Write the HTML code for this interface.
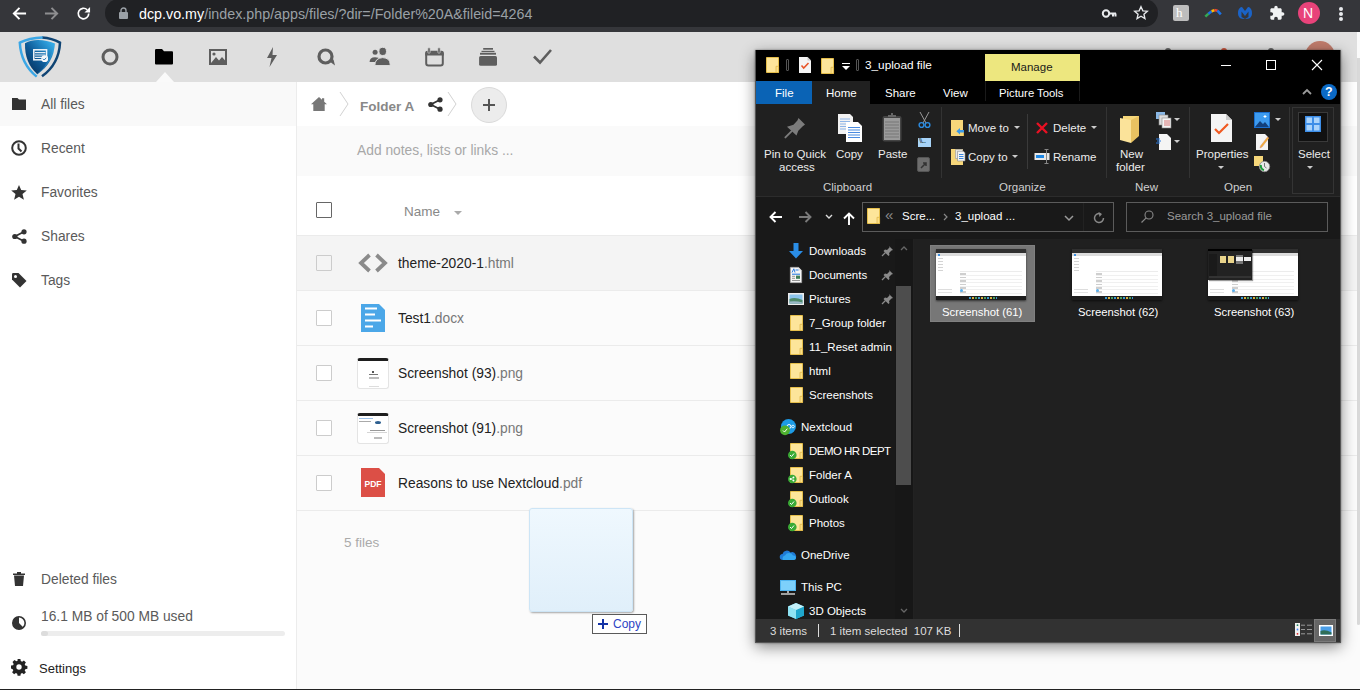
<!DOCTYPE html>
<html><head><meta charset="utf-8">
<style>
*{box-sizing:border-box;margin:0;padding:0}
html,body{width:1360px;height:690px;overflow:hidden;background:#fff;font-family:"Liberation Sans",sans-serif;position:relative}
.a{position:absolute}
.t{position:absolute;white-space:nowrap;line-height:1}
svg{position:absolute;overflow:visible}
#chrome{left:0;top:0;width:1360px;height:32px;background:#35363a}
#omni{left:105px;top:-1px;width:1053px;height:28px;background:#202124;border-radius:14px}
#nch{left:0;top:32px;width:1360px;height:50px;background:#dfdfdf}
#nav{left:0;top:82px;width:297px;height:608px;background:#fff;border-right:1px solid #ececec}
.nt{font-size:13.8px;color:#5a5a5a}
#main{left:297px;top:82px;width:1063px;height:608px;background:#fbfbfb}
.cb{position:absolute;width:16px;height:16px;border:1px solid #ccc;border-radius:1px;background:#fff}
.fn{font-size:13.8px;color:#222}
.ext{color:#777}
.hl{position:absolute;left:297px;width:1063px;height:1px;background:#ebebeb}
.ni{font-size:11.5px;color:#fff}.ci{font-size:11.3px;color:#fff}.si{font-size:11.5px;color:#ddd}
</style></head><body>
<!-- CHROME -->
<div id="chrome" class="a"></div>
<div id="omni" class="a"></div>
<svg style="left:12px;top:6px" width="15" height="15" viewBox="0 0 16 16"><path d="M15 8H2.5M8 2L2 8l6 6" fill="none" stroke="#fff" stroke-width="2.1"/></svg>
<svg style="left:44px;top:6px" width="15" height="15" viewBox="0 0 16 16"><path d="M1 8h12.5M8 2l6 6-6 6" fill="none" stroke="#8e8e90" stroke-width="2.1"/></svg>
<svg style="left:76px;top:6px" width="15" height="15" viewBox="0 0 16 16"><path d="M13.6 8A5.6 5.6 0 1 1 11.9 4" fill="none" stroke="#fff" stroke-width="1.8"/><path d="M15 1v6H9z" fill="#fff"/></svg>
<svg style="left:119px;top:7px" width="9" height="12" viewBox="0 0 9 12"><path d="M2 5V3.5a2.5 2.5 0 0 1 5 0V5" fill="none" stroke="#9aa0a6" stroke-width="1.4"/><rect x="0" y="5" width="9" height="7" rx="1" fill="#9aa0a6"/></svg>
<div class="t" style="left:139px;top:7px;font-size:14.3px;color:#9aa0a6"><span style="color:#fff">dcp.vo.my</span>/index.php/apps/files/?dir=/Folder%20A&amp;fileid=4264</div>
<!-- key -->
<svg style="left:1102px;top:9px" width="14" height="9" viewBox="0 0 14 9"><circle cx="4" cy="4.5" r="3.2" fill="none" stroke="#e8eaed" stroke-width="2"/><path d="M7 4.5h7M11 4.5v3M13.5 4.5v3" stroke="#e8eaed" stroke-width="2"/></svg>
<svg style="left:1133px;top:5px" width="16" height="16" viewBox="0 0 24 24"><path d="M12 2.5l2.8 6.2 6.7.6-5.1 4.5 1.5 6.6L12 16.9l-5.9 3.5 1.5-6.6-5.1-4.5 6.7-.6z" fill="none" stroke="#e8eaed" stroke-width="2"/></svg>
<div class="a" style="left:1173px;top:5px;width:16px;height:16px;background:#bdbdbd;border-radius:2px"></div>
<div class="t" style="left:1176px;top:6px;font-size:13px;color:#fff;font-family:'Liberation Serif'">h</div>
<svg style="left:1204px;top:8px" width="18" height="10" viewBox="0 0 18 10" stroke-width="2.6" fill="none"><path d="M1.3 8.6L4.6 5.6" stroke="#34a853"/><path d="M4.4 5.8L7.8 3.2" stroke="#1a73e8"/><path d="M7.6 3.3L10.6 2.1" stroke="#fbbc04"/><path d="M10.4 2.1L13.6 2.8" stroke="#ea4335"/><path d="M13.4 2.7L16.8 6.3" stroke="#1a73e8"/></svg>
<svg style="left:1237px;top:6px" width="16" height="14" viewBox="0 0 16 14"><path d="M1 7C1 2 4 1 5 1l3 4 3-4c1 0 4 1 4 6s-3 6-7 6-7-1-7-6z" fill="#1b63c6"/><path d="M4.5 5.5L8 10l3.5-4.5V11L8 13 4.5 11z" fill="#35363a"/></svg>
<svg style="left:1269px;top:5px" width="16" height="16" viewBox="0 0 24 24"><path d="M20.5 11H19V7c0-1.1-.9-2-2-2h-4V3.5C13 2.12 11.88 1 10.5 1S8 2.12 8 3.5V5H4c-1.1 0-1.99.9-1.99 2v3.8H3.5c1.49 0 2.7 1.21 2.7 2.7s-1.21 2.7-2.7 2.7H2V20c0 1.1.9 2 2 2h3.8v-1.5c0-1.490 1.21-2.7 2.7-2.7 1.49 0 2.7 1.21 2.7 2.7V22H17c1.1 0 2-.9 2-2v-4h1.5c1.38 0 2.5-1.12 2.5-2.5S21.88 11 20.5 11z" fill="#f1f3f4"/></svg>
<div class="a" style="left:1298px;top:2px;width:22px;height:22px;border-radius:50%;background:#e8437a"></div>
<div class="t" style="left:1303px;top:6px;font-size:14px;color:#fff">N</div>
<div class="a" style="left:1339px;top:7px;width:4px;height:4px;border-radius:50%;background:#e8eaed;box-shadow:0 5px 0 #e8eaed,0 10px 0 #e8eaed"></div>

<!-- NC HEADER -->
<div id="nch" class="a"></div>
<div class="a" style="left:1305px;top:41px;width:30px;height:30px;border-radius:50%;background:#c07c6c"></div>
<div class="a" style="left:1165px;top:48px;width:6px;height:6px;border-radius:50%;background:#666"></div>
<div class="a" style="left:1221px;top:48px;width:6px;height:6px;border-radius:50%;background:#c9553f"></div>
<div class="a" style="left:1268px;top:48px;width:6px;height:6px;border-radius:50%;background:#666"></div>
<!-- logo -->
<svg style="left:14px;top:34px" width="52" height="46" viewBox="0 0 52 46"><defs><linearGradient id="lg" x1="0.1" y1="0.9" x2="0.9" y2="0.1"><stop offset="0" stop-color="#06325e"/><stop offset="0.45" stop-color="#0e5c99"/><stop offset="1" stop-color="#34a9e6"/></linearGradient></defs>
<path d="M28 3.4Q38 4 46 8.7Q45 30 28 42.3" fill="none" stroke="#0f4474" stroke-width="2.5"/>
<path d="M28.7 3.4Q15 3.6 5.8 8.7Q7 30 22.7 42.6" fill="none" stroke="#3ba7e6" stroke-width="2.5"/>
<path d="M11 9.3Q17 6 24 6Q33 6 40.8 9.5Q40 29 23.3 40.2Q10.5 29 11 9.3z" fill="url(#lg)"/>
<path d="M23.3 40.2Q37 30 40.8 9.5" fill="none" stroke="#3aa4e2" stroke-width="0.8" opacity=".6"/>
<rect x="19.8" y="15.8" width="12.8" height="10" fill="none" stroke="#f2f6fa" stroke-width="1.5"/>
<path d="M21 18.6h10.5M21 21h10.5M21 23.4h7" stroke="#e8eef5" stroke-width="1.1"/>
<circle cx="30.7" cy="24.7" r="3.4" fill="#f4f7fa"/><path d="M29 24.8l1.2 1.2 2-2.2" stroke="#1a70b0" stroke-width="0.9" fill="none"/></svg>
<!-- header icons -->
<svg style="left:101px;top:48px" width="18" height="18" viewBox="0 0 18 18"><circle cx="9" cy="9" r="7" fill="none" stroke="#5e5e5e" stroke-width="3"/></svg>
<svg style="left:155px;top:49px" width="18" height="16" viewBox="0 0 18 16"><path d="M0 1.2Q0 0 1.2 0H7l2 2.2h8Q18 2.2 18 3.4V14.6Q18 15.5 17 15.5H1Q0 15.5 0 14.5z" fill="#000"/></svg>
<svg style="left:209px;top:49px" width="18" height="16" viewBox="0 0 18 16"><rect x="1" y="1" width="16" height="14" fill="none" stroke="#5e5e5e" stroke-width="2"/><circle cx="5" cy="5" r="1.6" fill="#5e5e5e"/><path d="M2 14l5-6 3 3.5 3-3.5 4 4.5v1.5z" fill="#5e5e5e"/></svg>
<svg style="left:266px;top:47px" width="12" height="20" viewBox="0 0 12 20"><path d="M7 0L1 11h4.5L3.5 20 11 8H6.5z" fill="#5e5e5e"/></svg>
<svg style="left:317px;top:48px" width="19" height="19" viewBox="0 0 19 19"><circle cx="8.5" cy="8.5" r="6.5" fill="none" stroke="#5e5e5e" stroke-width="3.2"/><path d="M12 13l6 4.5-1.5-6z" fill="#5e5e5e"/></svg>
<svg style="left:365px;top:42px" width="140" height="30" viewBox="0 0 140 30">
<circle cx="10.1" cy="10.3" r="2.5" fill="#5e5e5e"/><path d="M4.6 20Q4.6 15.3 10 15.2Q13.8 15.3 15.5 17.5V20z" fill="#5e5e5e"/>
<ellipse cx="17.7" cy="9.4" rx="3.8" ry="4.1" fill="#5e5e5e" stroke="#dfdfdf" stroke-width="1"/><path d="M9.8 23.6Q9.8 16 17.7 15.6Q25.2 16 25.2 22.4Q25.2 23.6 24 23.6z" fill="#5e5e5e" stroke="#dfdfdf" stroke-width="1"/>
<rect x="61.2" y="10" width="16.6" height="13.5" rx="2.2" fill="none" stroke="#5e5e5e" stroke-width="2"/><path d="M60.2 13.4V11Q60.2 8.8 62.4 8.8H76.6Q78.8 8.8 78.8 11V13.4z" fill="#5e5e5e"/>
<rect x="62.8" y="5.8" width="2.4" height="5.4" rx="1" fill="#5e5e5e" stroke="#dfdfdf" stroke-width="0.6"/><rect x="72.8" y="5.8" width="2.4" height="5.4" rx="1" fill="#5e5e5e" stroke="#dfdfdf" stroke-width="0.6"/>
<rect x="118.2" y="6" width="9.8" height="1.7" fill="#5e5e5e"/><rect x="116.5" y="8.8" width="13" height="1.3" fill="#5e5e5e"/><rect x="115" y="10.8" width="16" height="1.9" fill="#5e5e5e"/><rect x="114.1" y="13.9" width="17.9" height="9.8" rx="1.5" fill="#5e5e5e"/>
</svg>
<svg style="left:533px;top:48px" width="19" height="17" viewBox="0 0 19 17"><path d="M1 8.5l6 6L18 2" fill="none" stroke="#5e5e5e" stroke-width="2.6"/></svg>
<!-- triangle -->
<div class="a" style="left:156px;top:72px;width:0;height:0;border-left:9px solid transparent;border-right:9px solid transparent;border-bottom:10px solid #fafafa"></div>

<!-- NAV -->
<div id="nav" class="a"></div>
<div class="a" style="left:0;top:82px;width:296px;height:44px;background:#f9f9f9"></div>
<svg style="left:12px;top:98px" width="14" height="12" viewBox="0 0 14 12"><path d="M0 0h5.5l1.5 1.6H14V12H0z" fill="#333"/></svg>
<div class="t nt" style="left:41px;top:98px">All files</div>
<svg style="left:11px;top:140px" width="16" height="16" viewBox="0 0 16 16"><circle cx="8" cy="8" r="6.8" fill="none" stroke="#333" stroke-width="2"/><path d="M7.5 3.5V8.5l3 3" fill="none" stroke="#333" stroke-width="2"/></svg>
<div class="t nt" style="left:41px;top:142px">Recent</div>
<svg style="left:11px;top:185px" width="16" height="15" viewBox="0 0 16 15"><path d="M8 0l2.2 5.1 5.6.4-4.3 3.6 1.4 5.6L8 11.8l-4.9 2.9 1.4-5.6L.2 5.5l5.6-.4z" fill="#333"/></svg>
<div class="t nt" style="left:41px;top:186px">Favorites</div>
<svg style="left:12px;top:229px" width="15" height="15" viewBox="0 0 15 15"><circle cx="12" cy="2.8" r="2.6" fill="#333"/><circle cx="2.8" cy="7.5" r="2.6" fill="#333"/><circle cx="12" cy="12.2" r="2.6" fill="#333"/><path d="M12 2.8L2.8 7.5 12 12.2" fill="none" stroke="#333" stroke-width="1.8"/></svg>
<div class="t nt" style="left:41px;top:230px">Shares</div>
<svg style="left:12px;top:273px" width="15" height="15" viewBox="0 0 15 15"><path d="M0 1.2Q0 0 1.2 0H6.5L14.5 8 8 14.5 0 6.5z" fill="#333"/><circle cx="3.5" cy="3.5" r="1.5" fill="#fff"/></svg>
<div class="t nt" style="left:41px;top:274px">Tags</div>

<svg style="left:13px;top:572px" width="12" height="14" viewBox="0 0 12 14"><path d="M0 1.5h12V3H0zM4 0h4v1.5H4zM1 3.5h10l-1 10.5H2z" fill="#333"/></svg>
<div class="t nt" style="left:41px;top:573px">Deleted files</div>
<svg style="left:12px;top:616px" width="14" height="14" viewBox="0 0 14 14"><circle cx="7" cy="7" r="6.2" fill="#fff" stroke="#333" stroke-width="1.6"/><path d="M7 7V0.8A6.2 6.2 0 1 0 11.4 11.4z" fill="#333"/></svg>
<div class="t nt" style="left:41px;top:610px">16.1 MB of 500 MB used</div>
<div class="a" style="left:41px;top:631px;width:244px;height:5px;border-radius:3px;background:#ededed"></div>
<div class="a" style="left:41px;top:631px;width:7px;height:5px;border-radius:3px;background:#dcdcdc"></div>
<svg style="left:11px;top:659px" width="16" height="16" viewBox="0 0 16 16"><path d="M6.6 0h2.8l.4 2.1 1.3.6 1.8-1.2 2 2-1.2 1.8.6 1.3 2.1.4v2.8l-2.1.4-.6 1.3 1.2 1.8-2 2-1.8-1.2-1.3.6-.4 2.1H6.6l-.4-2.1-1.3-.6-1.8 1.2-2-2 1.2-1.8-.6-1.3L0 9.4V6.6l2.1-.4.6-1.3-1.2-1.8 2-2 1.8 1.2 1.3-.6z" fill="#222"/><circle cx="8" cy="8" r="2.7" fill="#fff"/></svg>
<div class="t" style="left:39px;top:662px;font-size:13px;color:#222">Settings</div>

<!-- MAIN -->
<div id="main" class="a"></div>
<div class="a" style="left:297px;top:82px;width:1063px;height:44px;background:#fff"></div>
<svg style="left:311px;top:97px" width="16" height="14" viewBox="0 0 16 14"><path d="M8 0L0 7.3h2.3V14h11.4V7.3H16L13.2 4.8V1.2h-2.2v1.6z" fill="#777"/></svg>
<svg style="left:339px;top:91px" width="10" height="26" viewBox="0 0 10 26"><path d="M1 1l8 12-8 12" fill="none" stroke="#d2d2d2" stroke-width="1"/></svg>
<div class="t" style="left:360px;top:100px;font-size:13.5px;font-weight:bold;color:#888">Folder A</div>
<svg style="left:428px;top:97px" width="15" height="15" viewBox="0 0 15 15"><circle cx="12" cy="2.8" r="2.6" fill="#333"/><circle cx="2.8" cy="7.5" r="2.6" fill="#333"/><circle cx="12" cy="12.2" r="2.6" fill="#333"/><path d="M12 2.8L2.8 7.5 12 12.2" fill="none" stroke="#333" stroke-width="1.8"/></svg>
<svg style="left:447px;top:91px" width="10" height="26" viewBox="0 0 10 26"><path d="M1 1l8 12-8 12" fill="none" stroke="#d2d2d2" stroke-width="1"/></svg>
<div class="a" style="left:471px;top:87px;width:36px;height:36px;border-radius:50%;background:#ececec;border:1px solid #dadada"></div>
<div class="a" style="left:483px;top:104px;width:12px;height:2px;background:#555"></div>
<div class="a" style="left:488px;top:99px;width:2px;height:12px;background:#555"></div>
<div class="a" style="left:297px;top:126px;width:1063px;height:50px;background:#fafafa"></div>
<div class="t" style="left:357px;top:144px;font-size:13.8px;color:#a8a8a8">Add notes, lists or links ...</div>
<div class="a" style="left:297px;top:176px;width:1063px;height:59px;background:#fff"></div>
<div class="cb" style="left:316px;top:202px;border-color:#666"></div>
<div class="t" style="left:404px;top:205px;font-size:13.5px;color:#888">Name</div>
<svg style="left:454px;top:211px" width="8" height="4" viewBox="0 0 8 4"><path d="M0 0h8L4 4z" fill="#aaa"/></svg>
<div class="hl" style="top:235px"></div>
<div class="a" style="left:297px;top:236px;width:1063px;height:54px;background:#f4f4f4"></div>
<div class="hl" style="top:290px"></div>
<div class="hl" style="top:345px"></div>
<div class="hl" style="top:400px"></div>
<div class="hl" style="top:455px"></div>
<div class="hl" style="top:510px"></div>
<div class="cb" style="left:316px;top:255px;background:#f4f4f4"></div>
<div class="cb" style="left:316px;top:310px"></div>
<div class="cb" style="left:316px;top:365px"></div>
<div class="cb" style="left:316px;top:420px"></div>
<div class="cb" style="left:316px;top:475px"></div>
<svg style="left:358px;top:253px" width="30" height="20" viewBox="0 0 30 20"><path d="M11.5 2L3 10l8.5 8M18.5 2L27 10l-8.5 8" fill="none" stroke="#8a8a8a" stroke-width="3.8"/></svg>
<div class="t fn" style="left:398px;top:257px">theme-2020-1<span class="ext">.html</span></div>
<svg style="left:361px;top:304px" width="24" height="28" viewBox="0 0 24 28"><path d="M0 0h18l6 6v22H0z" fill="#4ba7e8"/><path d="M4 4.5h12M4 10.5h10M4 16.5h16M4 22.5h8" stroke="#fff" stroke-width="2"/></svg>
<div class="t fn" style="left:398px;top:312px">Test1<span class="ext">.docx</span></div>
<div class="a" style="left:357px;top:358px;width:32px;height:31px;border:1px solid #e4e4e4;border-top:3px solid #1e1e1e;border-radius:3px;background:#fff"></div>
<div class="a" style="left:372px;top:371px;width:2px;height:2px;background:#555"></div>
<div class="a" style="left:369px;top:374px;width:9px;height:1px;background:#777"></div>
<div class="a" style="left:369px;top:377px;width:10px;height:2px;border:1px solid #bbb;background:#fff"></div>
<div class="a" style="left:369px;top:386px;width:10px;height:1px;background:#ddd"></div>
<div class="t fn" style="left:398px;top:367px">Screenshot (93)<span class="ext">.png</span></div>
<div class="a" style="left:357px;top:413px;width:32px;height:31px;border:1px solid #e4e4e4;border-top:3px solid #1e1e1e;border-radius:3px;background:#fff"></div>
<div class="a" style="left:359px;top:418px;width:14px;height:1px;background:#9cc0e8"></div>
<div class="a" style="left:359px;top:421px;width:12px;height:1px;background:#aaa"></div>
<div class="a" style="left:375px;top:421px;width:6px;height:3px;border-radius:50%;background:#2d5f8f"></div>
<div class="a" style="left:370px;top:430px;width:15px;height:1px;background:#999"></div>
<div class="a" style="left:367px;top:432px;width:20px;height:1px;background:#d5d5d5"></div>
<div class="a" style="left:374px;top:437px;width:8px;height:2px;background:#bbb"></div>
<div class="t fn" style="left:398px;top:422px">Screenshot (91)<span class="ext">.png</span></div>
<svg style="left:361px;top:468px" width="24" height="29" viewBox="0 0 24 29"><path d="M0 0h18l6 6v23H0z" fill="#dc4f46"/><text x="12" y="18.5" font-family="Liberation Sans" font-weight="bold" font-size="8.5" fill="#fff" text-anchor="middle">PDF</text></svg>
<div class="t fn" style="left:398px;top:477px">Reasons to use Nextcloud<span class="ext">.pdf</span></div>
<div class="t" style="left:344px;top:536px;font-size:13.5px;color:#aaa">5 files</div>
<!-- drag ghost -->
<div class="a" style="left:529px;top:508px;width:104px;height:104px;border:1px solid #cde5f6;border-radius:3px;background:linear-gradient(#eff8fe,#e0effa);box-shadow:1px 1px 2px rgba(0,0,0,.35)"></div>
<div class="a" style="left:592px;top:614px;width:55px;height:20px;border:1px solid #5a5a5a;background:#fff"></div>
<div class="a" style="left:598px;top:623px;width:10px;height:2px;background:#1433a6"></div>
<div class="a" style="left:602px;top:619px;width:2px;height:10px;background:#1433a6"></div>
<div class="t" style="left:613px;top:618px;font-size:12px;color:#2d44c4">Copy</div>
<div class="a" style="left:0;top:689px;width:1360px;height:1px;background:#222"></div>
<div class="a" style="left:1357px;top:32px;width:3px;height:26px;background:#fafafa"></div>
<div class="a" style="left:1357px;top:58px;width:3px;height:567px;background:#d9d9d9;border-radius:0 0 2px 2px"></div>
<!-- EXPLORER -->
<div class="a" style="left:755px;top:50px;width:586px;height:593px;background:#202020;border:1px solid #555;box-shadow:0 4px 14px rgba(0,0,0,.45),0 0 2px rgba(0,0,0,.4)"></div>
<div class="a" style="left:756px;top:50px;width:584px;height:54px;background:#000"></div>
<!-- title icons -->
<svg style="left:766px;top:57px" width="14" height="16" viewBox="0 0 14 16"><path d="M0.5 0.5h12v15h-12z" fill="#fde59a" stroke="#f0c64a" stroke-width=".9"/><path d="M10 9.3h2.6v6.2H10z" fill="#fbdf86" stroke="#ddb240" stroke-width=".7"/></svg>
<div class="a" style="left:786px;top:59px;width:3px;height:12px;border:1px solid #555;border-radius:1px"></div>
<svg style="left:799px;top:57px" width="12" height="16" viewBox="0 0 12 16"><path d="M0 0h8.5L12 3.5V16H0z" fill="#f4f4f4"/><path d="M8.5 0v3.5H12" fill="#ccc"/><path d="M2.5 8.5l2.2 2.5 4.8-5" fill="none" stroke="#e8562a" stroke-width="1.6"/></svg>
<svg style="left:821px;top:58px" width="14" height="16" viewBox="0 0 14 16"><path d="M0.5 0.5h12v15h-12z" fill="#fde59a" stroke="#f0c64a" stroke-width=".9"/><path d="M10 9.3h2.6v6.2H10z" fill="#fbdf86" stroke="#ddb240" stroke-width=".7"/></svg>
<svg style="left:842px;top:63px" width="8" height="8" viewBox="0 0 8 8"><path d="M0 0.5h8" stroke="#fff" stroke-width="1"/><path d="M0 3h8L4 7z" fill="#fff"/></svg>
<div class="a" style="left:856px;top:59px;width:3px;height:12px;border:1px solid #555;border-radius:1px"></div>
<div class="t" style="left:865px;top:60px;font-size:11.8px;color:#fff">3_upload file</div>
<div class="a" style="left:985px;top:54px;width:95px;height:27px;background:#ede77f"></div>
<div class="t" style="left:1011px;top:62px;font-size:11.5px;color:#1a1a1a">Manage</div>
<div class="a" style="left:1221px;top:65px;width:10px;height:1px;background:#fff"></div>
<div class="a" style="left:1266px;top:60px;width:10px;height:10px;border:1px solid #fff"></div>
<svg style="left:1312px;top:60px" width="10" height="10" viewBox="0 0 10 10"><path d="M0 0l10 10M10 0L0 10" stroke="#fff" stroke-width="1.1"/></svg>
<!-- tabs -->
<div class="a" style="left:756px;top:81px;width:56px;height:23px;background:#0a63b5"></div>
<div class="a" style="left:812px;top:81px;width:58px;height:23px;background:#202020"></div>
<div class="t" style="left:775px;top:88px;font-size:11.5px;color:#fff">File</div>
<div class="t" style="left:826px;top:88px;font-size:11.5px;color:#fff">Home</div>
<div class="t" style="left:885px;top:88px;font-size:11.5px;color:#fff">Share</div>
<div class="t" style="left:943px;top:88px;font-size:11.5px;color:#fff">View</div>
<div class="a" style="left:985px;top:81px;width:95px;height:20px;border-left:1px solid #1a1a1a;border-right:1px solid #1a1a1a"></div>
<div class="t" style="left:999px;top:88px;font-size:11.3px;color:#fff">Picture Tools</div>
<svg style="left:1302px;top:88px" width="10" height="7" viewBox="0 0 10 7"><path d="M1 6l4-4 4 4" fill="none" stroke="#9b9b9b" stroke-width="1.8"/></svg>
<div class="a" style="left:1321px;top:84px;width:16px;height:16px;border-radius:50%;background:#0b6ac6"></div>
<div class="t" style="left:1325px;top:86px;font-size:12.5px;font-weight:bold;color:#fff">?</div>
<!-- ribbon -->
<div class="a" style="left:756px;top:196px;width:584px;height:1px;background:#2c2c2c"></div>
<div class="a" style="left:941px;top:107px;width:1px;height:71px;background:#333"></div>
<div class="a" style="left:1106px;top:107px;width:1px;height:71px;background:#333"></div>
<div class="a" style="left:1189px;top:107px;width:1px;height:71px;background:#333"></div>
<div class="a" style="left:1289px;top:107px;width:1px;height:71px;background:#333"></div>
<div class="a" style="left:1027px;top:114px;width:1px;height:55px;background:#3a3a3a"></div>
<!-- pin -->
<svg style="left:780px;top:112px" width="30" height="30" viewBox="0 0 30 30"><path d="M18.5 6.1L17.4 8.6 13.5 12.8 7 14.8 16.5 23.5 18.3 18.7 22.5 14.6 25 12.6z" fill="#7c7c7c"/><path d="M11.7 19.1L5.4 25.4" stroke="#7c7c7c" stroke-width="1.9" stroke-linecap="round"/></svg>
<div class="t" style="left:764px;top:149px;font-size:11.5px;color:#ececec">Pin to Quick</div>
<div class="t" style="left:779px;top:162px;font-size:11.5px;color:#ececec">access</div>
<!-- copy -->
<svg style="left:838px;top:114px" width="24" height="28" viewBox="0 0 24 28"><path d="M0 0h12l3 3v17H0z" fill="#f2f2f2"/><path d="M2 5h10M2 7.5h10M2 10h10M2 12.5h10M2 15h10" stroke="#8eb5e8" stroke-width="1"/><path d="M8 8h12l4 4v16H8z" fill="#fff"/><path d="M10 13.5h12M10 16h12M10 18.5h12M10 21h12M10 23.5h12" stroke="#4b8be0" stroke-width="1.1"/></svg>
<div class="t" style="left:836px;top:149px;font-size:11.5px;color:#ececec">Copy</div>
<!-- paste -->
<svg style="left:882px;top:113px" width="20" height="29" viewBox="0 0 20 29"><rect x="0.5" y="3" width="19" height="25.5" rx="2" fill="#444"/><rect x="2" y="5" width="16" height="22" fill="#9a9a9a"/><path d="M3 9h14M3 12h14M3 15h14M3 18h14M3 21h14M3 24h14" stroke="#777" stroke-width="1"/><path d="M6 4h8V2H11V0H9V2H6z" fill="#666"/></svg>
<div class="t" style="left:878px;top:149px;font-size:11.5px;color:#ececec">Paste</div>
<svg style="left:918px;top:112px" width="13" height="16" viewBox="0 0 13 16"><path d="M2 0l6 11M11 0L5 11" stroke="#9a9a9a" stroke-width="1"/><circle cx="3.5" cy="13" r="2.4" fill="none" stroke="#2c8be0" stroke-width="1.4"/><circle cx="9.5" cy="13" r="2.4" fill="none" stroke="#2c8be0" stroke-width="1.4"/></svg>
<div class="a" style="left:918px;top:138px;width:13px;height:9px;background:#a8d4f8"></div>
<div class="t" style="left:919px;top:137px;font-size:8px;color:#234;letter-spacing:-1px">\\...</div>
<svg style="left:917px;top:156px" width="13" height="16" viewBox="0 0 13 16"><rect x="0.5" y="1.5" width="12" height="14" rx="1.5" fill="#6d6d6d" stroke="#555"/><path d="M4 12l5-5M6 7h3v3" stroke="#333" stroke-width="1.5" fill="none"/></svg>
<div class="t" style="left:823px;top:182px;font-size:11.5px;color:#cfcfcf">Clipboard</div>
<!-- organize -->
<svg style="left:951px;top:120px" width="14" height="16" viewBox="0 0 14 16"><path d="M0 0h12v16H0z" fill="#f6d67a"/><path d="M12 12h1v4h-1z" fill="#e3b850"/><path d="M5.3 11.3L9 8V10H13V12.6H9V14.6z" fill="#3b9ae8"/></svg>
<div class="t" style="left:968px;top:123px;font-size:11.5px;color:#ececec">Move to</div>
<svg style="left:1014px;top:126px" width="6" height="3" viewBox="0 0 6 3"><path d="M0 0h6L3 3z" fill="#ccc"/></svg>
<svg style="left:951px;top:149px" width="15" height="16" viewBox="0 0 15 16"><path d="M0 0h12v16H0z" fill="#f6d67a"/><path d="M4.5 0.5h7v9h-7z" fill="#e8e8e8" stroke="#999" stroke-width=".6"/><path d="M6.5 2.3h6l1.5 1.5V12h-7.5z" fill="#f4f4f4" stroke="#888" stroke-width=".6"/><path d="M8 5.5h4.5M8 7.5h4.5M8 9.5h4.5" stroke="#3b86e0" stroke-width="1"/></svg>
<div class="t" style="left:968px;top:152px;font-size:11.5px;color:#ececec">Copy to</div>
<svg style="left:1012px;top:155px" width="6" height="3" viewBox="0 0 6 3"><path d="M0 0h6L3 3z" fill="#ccc"/></svg>
<svg style="left:1036px;top:122px" width="12" height="12" viewBox="0 0 12 12"><path d="M1 1l10 10M11 1L1 11" stroke="#e81123" stroke-width="2.4"/></svg>
<div class="t" style="left:1053px;top:123px;font-size:11.5px;color:#ececec">Delete</div>
<svg style="left:1091px;top:126px" width="6" height="3" viewBox="0 0 6 3"><path d="M0 0h6L3 3z" fill="#ccc"/></svg>
<svg style="left:1034px;top:149px" width="16" height="15" viewBox="0 0 16 15"><rect x="0.5" y="4" width="15" height="7" fill="#e8e8e8"/><rect x="2" y="6" width="8" height="3" fill="#1e88e5"/><path d="M12.5 0v15M10.5 0.5h4M10.5 14.5h4" stroke="#888" stroke-width="1"/></svg>
<div class="t" style="left:1053px;top:152px;font-size:11.5px;color:#ececec">Rename</div>
<div class="t" style="left:999px;top:182px;font-size:11.5px;color:#cfcfcf">Organize</div>
<!-- new -->
<svg style="left:1120px;top:115px" width="20" height="28" viewBox="0 0 20 28"><path d="M3 1h16v20H3z" fill="#f6d77a"/><path d="M0 3l11 2v23L0 25z" fill="#fbe39a"/><path d="M11 5l8-4v20l-8 7z" fill="#e9c261"/></svg>
<div class="t" style="left:1120px;top:149px;font-size:11.5px;color:#ececec">New</div>
<div class="t" style="left:1116px;top:162px;font-size:11.5px;color:#ececec">folder</div>
<svg style="left:1156px;top:112px" width="16" height="16" viewBox="0 0 16 16"><rect x="0" y="0" width="9" height="7" fill="#8ab8e6"/><rect x="3" y="3" width="9" height="10" fill="#ddd" stroke="#888" stroke-width=".6"/><rect x="6" y="6" width="9" height="10" fill="#f4f4f4" stroke="#888" stroke-width=".6"/><path d="M8 9h6M8 11h6M8 13h6" stroke="#c44" stroke-width=".7"/></svg>
<svg style="left:1174px;top:118px" width="6" height="3" viewBox="0 0 6 3"><path d="M0 0h6L3 3z" fill="#ccc"/></svg>
<svg style="left:1156px;top:134px" width="15" height="16" viewBox="0 0 15 16"><path d="M3 0h8l4 4v12H3z" fill="#f4f4f4"/><path d="M0 5h4M1 7h4M0 9h4" stroke="#2a7de1" stroke-width="1"/></svg>
<svg style="left:1174px;top:140px" width="6" height="3" viewBox="0 0 6 3"><path d="M0 0h6L3 3z" fill="#ccc"/></svg>
<div class="t" style="left:1135px;top:182px;font-size:11.5px;color:#cfcfcf">New</div>
<!-- open -->
<svg style="left:1211px;top:114px" width="21" height="28" viewBox="0 0 21 28"><path d="M0 0h15l6 6v22H0z" fill="#f4f4f4"/><path d="M15 0v6h6" fill="#ccc"/><path d="M4 15l4 4 9-9" fill="none" stroke="#f05a22" stroke-width="2.2"/></svg>
<div class="t" style="left:1196px;top:149px;font-size:11.5px;color:#ececec">Properties</div>
<svg style="left:1218px;top:166px" width="6" height="3" viewBox="0 0 6 3"><path d="M0 0h6L3 3z" fill="#ccc"/></svg>
<svg style="left:1254px;top:112px" width="16" height="16" viewBox="0 0 16 16"><rect x="0" y="0" width="16" height="16" fill="#1a6fd0"/><rect x="1" y="1" width="14" height="14" fill="#3d9bef"/><path d="M1 15l5-6 3 3 2-2 4 5z" fill="#12407c"/><path d="M11 3v3M9.5 4.5h3" stroke="#fff" stroke-width="1"/></svg>
<svg style="left:1275px;top:118px" width="6" height="3" viewBox="0 0 6 3"><path d="M0 0h6L3 3z" fill="#ccc"/></svg>
<svg style="left:1256px;top:134px" width="15" height="16" viewBox="0 0 15 16"><path d="M0 0h9l3 3v13H0z" fill="#f4f4f4"/><path d="M13 4L6 13l-2 1 .5-2 7-9z" fill="#f2b233" stroke="#c77" stroke-width=".4"/></svg>
<svg style="left:1254px;top:156px" width="16" height="16" viewBox="0 0 16 16"><path d="M0 0h9v10H0z" fill="#f6d77a"/><circle cx="10.5" cy="10.5" r="5.2" fill="#e8e8e8" stroke="#888" stroke-width=".8"/><path d="M7 9a4 4 0 0 0 3 5" stroke="#1c9a3a" stroke-width="2" fill="none"/><path d="M10.5 7v3.5l2 1.5" stroke="#555" stroke-width=".8" fill="none"/></svg>
<div class="t" style="left:1224px;top:182px;font-size:11.5px;color:#cfcfcf">Open</div>
<!-- select -->
<div class="a" style="left:1292px;top:107px;width:42px;height:87px;border:1px solid #343434"></div>
<div class="a" style="left:1298px;top:112px;width:30px;height:30px;background:#111;border:1px solid #3a3a3a"></div>
<svg style="left:1305px;top:116px" width="16" height="16" viewBox="0 0 16 16"><rect x="0" y="0" width="16" height="16" fill="#3d8ee8"/><rect x="1.5" y="1.5" width="5.5" height="5.5" fill="#a9d3fb"/><rect x="9" y="1.5" width="5.5" height="5.5" fill="#a9d3fb"/><rect x="1.5" y="9" width="5.5" height="5.5" fill="#a9d3fb"/><rect x="9" y="9" width="5.5" height="5.5" fill="#a9d3fb"/></svg>
<div class="t" style="left:1298px;top:149px;font-size:11.5px;color:#ececec">Select</div>
<svg style="left:1307px;top:166px" width="6" height="3" viewBox="0 0 6 3"><path d="M0 0h6L3 3z" fill="#ccc"/></svg>
<!-- address row -->
<div class="a" style="left:756px;top:197px;width:584px;height:42px;background:#191919"></div>
<svg style="left:769px;top:211px" width="13" height="12" viewBox="0 0 13 12"><path d="M13 6H1.5M6.5 1L1.5 6l5 5" fill="none" stroke="#fff" stroke-width="1.9"/></svg>
<svg style="left:799px;top:211px" width="13" height="12" viewBox="0 0 13 12"><path d="M0 6h11.5M6.5 1l5 5-5 5" fill="none" stroke="#7a7a7a" stroke-width="1.9"/></svg>
<svg style="left:825px;top:214px" width="8" height="5" viewBox="0 0 8 5"><path d="M1 1l3 3 3-3" fill="none" stroke="#ddd" stroke-width="1.4"/></svg>
<svg style="left:843px;top:212px" width="12" height="13" viewBox="0 0 12 13"><path d="M6 13V1.5M1 6.5l5-5 5 5" fill="none" stroke="#fff" stroke-width="1.9"/></svg>
<div class="a" style="left:862px;top:202px;width:252px;height:30px;border:1px solid #5b5b5b;background:#191919"></div>
<div class="a" style="left:1083px;top:203px;width:1px;height:28px;background:#222"></div>
<svg style="left:867px;top:208px" width="14" height="17" viewBox="0 0 14 17"><path d="M0.5 0.5h12v15h-12z" fill="#fde59a" stroke="#f0c64a" stroke-width=".9"/><path d="M10 9.3h2.6v6.2H10z" fill="#fbdf86" stroke="#ddb240" stroke-width=".7"/></svg>
<div class="t" style="left:885px;top:207px;font-size:15px;color:#8a8a8a">«</div>
<div class="t" style="left:902px;top:211px;font-size:11.5px;color:#fff">Scre...</div>
<svg style="left:943px;top:213px" width="5" height="8" viewBox="0 0 5 8"><path d="M1 1l3 3-3 3" fill="none" stroke="#888" stroke-width="1.2"/></svg>
<div class="t" style="left:955px;top:211px;font-size:11.5px;color:#fff">3_upload ...</div>
<svg style="left:1064px;top:215px" width="10" height="6" viewBox="0 0 10 6"><path d="M1 1l4 4 4-4" fill="none" stroke="#9a9a9a" stroke-width="1.5"/></svg>
<svg style="left:1093px;top:212px" width="12" height="12" viewBox="0 0 12 12"><path d="M10.5 6A4.5 4.5 0 1 1 7.5 1.8" fill="none" stroke="#888" stroke-width="1.5"/><path d="M5.5 0l3.5 2-2.5 3z" fill="#888"/></svg>
<div class="a" style="left:1126px;top:202px;width:202px;height:30px;border:1px solid #5b5b5b;background:#191919"></div>
<svg style="left:1141px;top:210px" width="13" height="13" viewBox="0 0 13 13"><circle cx="8" cy="5" r="4" fill="none" stroke="#888" stroke-width="1.1"/><path d="M5.2 7.8L0.5 12.5" stroke="#888" stroke-width="1.2"/></svg>
<div class="t" style="left:1167px;top:211px;font-size:11.5px;color:#9a9a9a">Search 3_upload file</div>
<!-- nav pane -->
<div class="a" style="left:756px;top:239px;width:158px;height:380px;background:#191919"></div>
<!-- nav items -->
<svg style="left:788px;top:243px" width="16" height="16" viewBox="0 0 16 16"><path d="M5.5 0h5v8H15L8 15.5 1 8h4.5z" fill="#2a8de6"/></svg>
<div class="t ni" style="left:809px;top:246px">Downloads</div>
<svg class="pin" style="left:882px;top:246px" width="11" height="10" viewBox="0 0 11 10"><path d="M7 0l4 4-1.5.5-2.5 2.5.5 2L6.5 10 1.5 5 3 3.5l2 .5L7.5 1.5z" fill="#8a8a8a"/><path d="M3.5 6.5L0 10" stroke="#8a8a8a" stroke-width="1.2"/></svg>
<svg style="left:790px;top:267px" width="12" height="16" viewBox="0 0 12 16"><path d="M0.3 0.3h8.2L11.7 3.5V15.7H0.3z" fill="#f6f6f6" stroke="#9a9a9a" stroke-width=".6"/><path d="M8.5 0.3V3.5h3.2" fill="#ddd"/><path d="M2 5.5L3.8 1.8 5 5.5M5.5 3h3" stroke="#2a7de1" stroke-width="1" fill="none"/><path d="M2 7.2h8" stroke="#2a7de1" stroke-width="1.1"/><path d="M2 9.3h3M2 11.3h3M2 13.5h8" stroke="#8a8a8a" stroke-width=".9"/><rect x="6" y="8.6" width="4" height="3.2" fill="#3f7f58"/></svg>
<div class="t ni" style="left:809px;top:270px">Documents</div>
<svg class="pin" style="left:882px;top:270px" width="11" height="10" viewBox="0 0 11 10"><path d="M7 0l4 4-1.5.5-2.5 2.5.5 2L6.5 10 1.5 5 3 3.5l2 .5L7.5 1.5z" fill="#8a8a8a"/><path d="M3.5 6.5L0 10" stroke="#8a8a8a" stroke-width="1.2"/></svg>
<svg style="left:788px;top:293px" width="16" height="12" viewBox="0 0 16 12"><rect x="0" y="0" width="16" height="12" fill="#ececec"/><rect x="1.5" y="1.5" width="13" height="9" fill="#8cc4ec"/><path d="M1.5 6Q7 3.5 14.5 7V10.5H1.5z" fill="#4f8a6a"/><path d="M1.5 8.5Q8 7.5 14.5 9.5V10.5H1.5z" fill="#9ab8c8"/></svg>
<div class="t ni" style="left:809px;top:294px">Pictures</div>
<svg class="pin" style="left:882px;top:294px" width="11" height="10" viewBox="0 0 11 10"><path d="M7 0l4 4-1.5.5-2.5 2.5.5 2L6.5 10 1.5 5 3 3.5l2 .5L7.5 1.5z" fill="#8a8a8a"/><path d="M3.5 6.5L0 10" stroke="#8a8a8a" stroke-width="1.2"/></svg>
<svg style="left:790px;top:315px" width="14" height="16" viewBox="0 0 14 16"><path d="M0.5 0.5h12v15h-12z" fill="#fde59a" stroke="#f0c64a" stroke-width=".9"/><path d="M10 9.3h2.6v6.2H10z" fill="#fbdf86" stroke="#ddb240" stroke-width=".7"/></svg>
<div class="t ni" style="left:809px;top:317.8px">7_Group folder</div>
<svg style="left:790px;top:339px" width="14" height="16" viewBox="0 0 14 16"><path d="M0.5 0.5h12v15h-12z" fill="#fde59a" stroke="#f0c64a" stroke-width=".9"/><path d="M10 9.3h2.6v6.2H10z" fill="#fbdf86" stroke="#ddb240" stroke-width=".7"/></svg>
<div class="t ni" style="left:809px;top:341.8px">11_Reset admin</div>
<svg style="left:790px;top:363px" width="14" height="16" viewBox="0 0 14 16"><path d="M0.5 0.5h12v15h-12z" fill="#fde59a" stroke="#f0c64a" stroke-width=".9"/><path d="M10 9.3h2.6v6.2H10z" fill="#fbdf86" stroke="#ddb240" stroke-width=".7"/></svg>
<div class="t ni" style="left:809px;top:365.8px">html</div>
<svg style="left:790px;top:387px" width="14" height="16" viewBox="0 0 14 16"><path d="M0.5 0.5h12v15h-12z" fill="#fde59a" stroke="#f0c64a" stroke-width=".9"/><path d="M10 9.3h2.6v6.2H10z" fill="#fbdf86" stroke="#ddb240" stroke-width=".7"/></svg>
<div class="t ni" style="left:809px;top:389.8px">Screenshots</div>

<svg style="left:780px;top:419px" width="16" height="16" viewBox="0 0 16 16"><circle cx="8.5" cy="7.5" r="7.5" fill="#1d9be6"/><circle cx="9" cy="7.5" r="2" fill="none" stroke="#fff" stroke-width="1"/><circle cx="13" cy="7.5" r="1.3" fill="none" stroke="#fff" stroke-width=".8"/><circle cx="5" cy="11.3" r="4.9" fill="#4fb12f"/><path d="M3 11.5l1.5 1.5 2.8-3.3" stroke="#fff" stroke-width="1" fill="none"/></svg>
<div class="t ni" style="left:801px;top:422px">Nextcloud</div>
<svg style="left:788px;top:443px" width="16" height="17" viewBox="0 0 16 17"><path d="M2.5 0.5h12v15h-12z" fill="#fde59a" stroke="#f0c64a" stroke-width=".9"/><path d="M12 9.3h2.6v6.2H12z" fill="#fbdf86" stroke="#ddb240" stroke-width=".7"/><circle cx="4.3" cy="12" r="4.3" fill="#3aaa35"/><path d="M2 12l1.5 1.5 2.5-3" stroke="#fff" stroke-width="1" fill="none"/></svg>
<div class="t ni" style="left:809px;top:446.2px;letter-spacing:-0.55px">DEMO HR DEPT</div>
<svg style="left:788px;top:467px" width="16" height="17" viewBox="0 0 16 17"><path d="M2.5 0.5h12v15h-12z" fill="#fde59a" stroke="#f0c64a" stroke-width=".9"/><path d="M12 9.3h2.6v6.2H12z" fill="#fbdf86" stroke="#ddb240" stroke-width=".7"/><circle cx="4.3" cy="12" r="4.3" fill="#3aaa35"/><circle cx="5.5" cy="10.5" r=".9" fill="#fff"/><circle cx="2.5" cy="12" r=".9" fill="#fff"/><circle cx="5.5" cy="13.5" r=".9" fill="#fff"/><path d="M5.5 10.5L2.5 12l3 1.5" stroke="#fff" stroke-width=".6" fill="none"/></svg>
<div class="t ni" style="left:809px;top:470.2px;">Folder A</div>
<svg style="left:788px;top:491px" width="16" height="17" viewBox="0 0 16 17"><path d="M2.5 0.5h12v15h-12z" fill="#fde59a" stroke="#f0c64a" stroke-width=".9"/><path d="M12 9.3h2.6v6.2H12z" fill="#fbdf86" stroke="#ddb240" stroke-width=".7"/><circle cx="4.3" cy="12" r="4.3" fill="#3aaa35"/><path d="M2 12l1.5 1.5 2.5-3" stroke="#fff" stroke-width="1" fill="none"/></svg>
<div class="t ni" style="left:809px;top:493.9px;">Outlook</div>
<svg style="left:788px;top:515px" width="16" height="17" viewBox="0 0 16 17"><path d="M2.5 0.5h12v15h-12z" fill="#fde59a" stroke="#f0c64a" stroke-width=".9"/><path d="M12 9.3h2.6v6.2H12z" fill="#fbdf86" stroke="#ddb240" stroke-width=".7"/><circle cx="4.3" cy="12" r="4.3" fill="#3aaa35"/><path d="M2 12l1.5 1.5 2.5-3" stroke="#fff" stroke-width="1" fill="none"/></svg>
<div class="t ni" style="left:809px;top:518.0px;">Photos</div>

<svg style="left:780px;top:549px" width="16" height="11" viewBox="0 0 16 11"><path d="M3 11A3 3 0 0 1 2.5 5 4.5 4.5 0 0 1 10.5 3.5 3.5 3.5 0 0 1 13.5 11z" fill="#1f7bd6"/><path d="M3 11A3 3 0 0 1 5 6.5 4.5 4.5 0 0 1 13 6.5 2.5 2.5 0 0 1 16 9 2 2 0 0 1 14 11z" fill="#34a7f0"/></svg>
<div class="t ni" style="left:801px;top:550px">OneDrive</div>
<svg style="left:780px;top:580px" width="16" height="15" viewBox="0 0 16 15"><rect x="0" y="0" width="16" height="11" fill="#4fb4f0"/><rect x="1" y="1" width="14" height="9" fill="#7dd0fb"/><path d="M7 11h2v2H7z" fill="#aaa"/><path d="M1 14h14" stroke="#ccc" stroke-width="1.5"/></svg>
<div class="t ni" style="left:801px;top:582px">This PC</div>
<svg style="left:788px;top:603px" width="16" height="16" viewBox="0 0 16 16"><path d="M8 0l8 3.5v9L8 16 0 12.5v-9z" fill="#3bc1e0"/><path d="M0 3.5L8 7v9L0 12.5z" fill="#8fe3f3"/><path d="M8 7l8-3.5v9L8 16z" fill="#1fa6cc"/><path d="M8 0l8 3.5L8 7 0 3.5z" fill="#c4f1fa"/></svg>
<div class="t ni" style="left:809px;top:606px">3D Objects</div>
<div class="a" style="left:895px;top:239px;width:18px;height:380px;background:#171717"></div>
<div class="a" style="left:896px;top:286px;width:15px;height:199px;background:#4d4d4d"></div>
<svg style="left:900px;top:245px" width="8" height="6" viewBox="0 0 8 6"><path d="M1 5l3-3 3 3" fill="none" stroke="#666" stroke-width="1.3"/></svg>
<svg style="left:900px;top:608px" width="8" height="6" viewBox="0 0 8 6"><path d="M1 1l3 3 3-3" fill="none" stroke="#666" stroke-width="1.3"/></svg>
<!-- content -->
<div class="a" style="left:913px;top:239px;width:1px;height:380px;background:#222"></div>
<div class="a" style="left:930px;top:245px;width:105px;height:77px;background:#777;border:1px solid #808080"></div>
<div class="a" style="left:936px;top:249px;width:90px;height:51px;background:#fff;box-shadow:0 1px 2px rgba(0,0,0,.6)"></div>
<div class="a" style="left:936px;top:249px;width:90px;height:4px;background:#303030"></div>
<div class="a" style="left:936px;top:253px;width:90px;height:3px;background:#dcdcdc"></div>
<div class="a" style="left:938px;top:254px;width:2px;height:2px;background:#3a8ee0"></div>
<div class="a" style="left:938px;top:258px;width:5px;height:1px;background:#d4d4d4"></div>
<div class="a" style="left:938px;top:261px;width:5px;height:1px;background:#d4d4d4"></div>
<div class="a" style="left:938px;top:264px;width:5px;height:1px;background:#d4d4d4"></div>
<div class="a" style="left:938px;top:267px;width:5px;height:1px;background:#d4d4d4"></div>
<div class="a" style="left:938px;top:270px;width:5px;height:1px;background:#d4d4d4"></div>
<div class="a" style="left:938px;top:289px;width:14px;height:1px;background:#ddd"></div>
<div class="a" style="left:938px;top:292px;width:14px;height:1px;background:#e4e4e4"></div>
<div class="a" style="left:960px;top:271px;width:62px;height:1px;background:#ececec"></div>
<div class="a" style="left:960px;top:275.0px;width:62px;height:1px;background:#f0f0f0"></div>
<div class="a" style="left:960px;top:273.0px;width:6px;height:1.5px;background:#cfcfcf"></div>
<div class="a" style="left:960px;top:278.6px;width:62px;height:1px;background:#f0f0f0"></div>
<div class="a" style="left:960px;top:276.6px;width:6px;height:1.5px;background:#cfcfcf"></div>
<div class="a" style="left:960px;top:282.2px;width:62px;height:1px;background:#f0f0f0"></div>
<div class="a" style="left:960px;top:280.2px;width:6px;height:1.5px;background:#cfcfcf"></div>
<div class="a" style="left:960px;top:285.8px;width:62px;height:1px;background:#f0f0f0"></div>
<div class="a" style="left:960px;top:283.8px;width:6px;height:1.5px;background:#cfcfcf"></div>
<div class="a" style="left:960px;top:289.4px;width:62px;height:1px;background:#f0f0f0"></div>
<div class="a" style="left:960px;top:287.4px;width:6px;height:1.5px;background:#cfcfcf"></div>
<div class="a" style="left:960px;top:293.0px;width:62px;height:1px;background:#f0f0f0"></div>
<div class="a" style="left:960px;top:291.0px;width:6px;height:1.5px;background:#cfcfcf"></div>
<div class="a" style="left:960px;top:289px;width:3px;height:3px;border-radius:50%;background:#5ab0ee"></div>
<div class="a" style="left:936px;top:296px;width:90px;height:4px;background:#1c1c1c"></div>
<div class="a" style="left:969px;top:297px;width:28px;height:2px;background:repeating-linear-gradient(90deg,#3a9ad0 0 2px,#1c1c1c 2px 3px,#d8b040 3px 5px,#1c1c1c 5px 6px,#4aa060 6px 8px,#1c1c1c 8px 9px)"></div>
<div class="a" style="left:1072px;top:249px;width:90px;height:51px;background:#fff;box-shadow:0 1px 2px rgba(0,0,0,.6)"></div>
<div class="a" style="left:1072px;top:249px;width:90px;height:4px;background:#303030"></div>
<div class="a" style="left:1072px;top:253px;width:90px;height:3px;background:#dcdcdc"></div>
<div class="a" style="left:1074px;top:254px;width:2px;height:2px;background:#3a8ee0"></div>
<div class="a" style="left:1074px;top:258px;width:5px;height:1px;background:#d4d4d4"></div>
<div class="a" style="left:1074px;top:261px;width:5px;height:1px;background:#d4d4d4"></div>
<div class="a" style="left:1074px;top:264px;width:5px;height:1px;background:#d4d4d4"></div>
<div class="a" style="left:1074px;top:267px;width:5px;height:1px;background:#d4d4d4"></div>
<div class="a" style="left:1074px;top:270px;width:5px;height:1px;background:#d4d4d4"></div>
<div class="a" style="left:1074px;top:289px;width:14px;height:1px;background:#ddd"></div>
<div class="a" style="left:1074px;top:292px;width:14px;height:1px;background:#e4e4e4"></div>
<div class="a" style="left:1096px;top:271px;width:62px;height:1px;background:#ececec"></div>
<div class="a" style="left:1096px;top:275.0px;width:62px;height:1px;background:#f0f0f0"></div>
<div class="a" style="left:1096px;top:273.0px;width:6px;height:1.5px;background:#cfcfcf"></div>
<div class="a" style="left:1096px;top:278.6px;width:62px;height:1px;background:#f0f0f0"></div>
<div class="a" style="left:1096px;top:276.6px;width:6px;height:1.5px;background:#cfcfcf"></div>
<div class="a" style="left:1096px;top:282.2px;width:62px;height:1px;background:#f0f0f0"></div>
<div class="a" style="left:1096px;top:280.2px;width:6px;height:1.5px;background:#cfcfcf"></div>
<div class="a" style="left:1096px;top:285.8px;width:62px;height:1px;background:#f0f0f0"></div>
<div class="a" style="left:1096px;top:283.8px;width:6px;height:1.5px;background:#cfcfcf"></div>
<div class="a" style="left:1096px;top:289.4px;width:62px;height:1px;background:#f0f0f0"></div>
<div class="a" style="left:1096px;top:287.4px;width:6px;height:1.5px;background:#cfcfcf"></div>
<div class="a" style="left:1096px;top:293.0px;width:62px;height:1px;background:#f0f0f0"></div>
<div class="a" style="left:1096px;top:291.0px;width:6px;height:1.5px;background:#cfcfcf"></div>
<div class="a" style="left:1096px;top:289px;width:3px;height:3px;border-radius:50%;background:#5ab0ee"></div>
<div class="a" style="left:1072px;top:296px;width:90px;height:4px;background:#1c1c1c"></div>
<div class="a" style="left:1105px;top:297px;width:28px;height:2px;background:repeating-linear-gradient(90deg,#3a9ad0 0 2px,#1c1c1c 2px 3px,#d8b040 3px 5px,#1c1c1c 5px 6px,#4aa060 6px 8px,#1c1c1c 8px 9px)"></div>
<div class="a" style="left:1208px;top:249px;width:90px;height:51px;background:#fff;box-shadow:0 1px 2px rgba(0,0,0,.6)"></div>
<div class="a" style="left:1208px;top:249px;width:90px;height:4px;background:#303030"></div>
<div class="a" style="left:1208px;top:253px;width:90px;height:3px;background:#dcdcdc"></div>
<div class="a" style="left:1210px;top:254px;width:2px;height:2px;background:#3a8ee0"></div>
<div class="a" style="left:1210px;top:258px;width:5px;height:1px;background:#d4d4d4"></div>
<div class="a" style="left:1210px;top:261px;width:5px;height:1px;background:#d4d4d4"></div>
<div class="a" style="left:1210px;top:264px;width:5px;height:1px;background:#d4d4d4"></div>
<div class="a" style="left:1210px;top:267px;width:5px;height:1px;background:#d4d4d4"></div>
<div class="a" style="left:1210px;top:270px;width:5px;height:1px;background:#d4d4d4"></div>
<div class="a" style="left:1210px;top:289px;width:14px;height:1px;background:#ddd"></div>
<div class="a" style="left:1210px;top:292px;width:14px;height:1px;background:#e4e4e4"></div>
<div class="a" style="left:1232px;top:271px;width:62px;height:1px;background:#ececec"></div>
<div class="a" style="left:1232px;top:275.0px;width:62px;height:1px;background:#f0f0f0"></div>
<div class="a" style="left:1232px;top:273.0px;width:6px;height:1.5px;background:#cfcfcf"></div>
<div class="a" style="left:1232px;top:278.6px;width:62px;height:1px;background:#f0f0f0"></div>
<div class="a" style="left:1232px;top:276.6px;width:6px;height:1.5px;background:#cfcfcf"></div>
<div class="a" style="left:1232px;top:282.2px;width:62px;height:1px;background:#f0f0f0"></div>
<div class="a" style="left:1232px;top:280.2px;width:6px;height:1.5px;background:#cfcfcf"></div>
<div class="a" style="left:1232px;top:285.8px;width:62px;height:1px;background:#f0f0f0"></div>
<div class="a" style="left:1232px;top:283.8px;width:6px;height:1.5px;background:#cfcfcf"></div>
<div class="a" style="left:1232px;top:289.4px;width:62px;height:1px;background:#f0f0f0"></div>
<div class="a" style="left:1232px;top:287.4px;width:6px;height:1.5px;background:#cfcfcf"></div>
<div class="a" style="left:1232px;top:293.0px;width:62px;height:1px;background:#f0f0f0"></div>
<div class="a" style="left:1232px;top:291.0px;width:6px;height:1.5px;background:#cfcfcf"></div>
<div class="a" style="left:1232px;top:289px;width:3px;height:3px;border-radius:50%;background:#5ab0ee"></div>
<div class="a" style="left:1208px;top:296px;width:90px;height:4px;background:#1c1c1c"></div>
<div class="a" style="left:1241px;top:297px;width:28px;height:2px;background:repeating-linear-gradient(90deg,#3a9ad0 0 2px,#1c1c1c 2px 3px,#d8b040 3px 5px,#1c1c1c 5px 6px,#4aa060 6px 8px,#1c1c1c 8px 9px)"></div>
<div class="a" style="left:1208px;top:249px;width:44px;height:31px;background:#222;border-top:2px solid #000;box-shadow:1px 1px 1px rgba(0,0,0,.4)"></div>
<div class="a" style="left:1209px;top:254px;width:8px;height:24px;background:#1a1a1a"></div>
<div class="a" style="left:1220px;top:256px;width:6px;height:7px;background:#e8d38a"></div>
<div class="a" style="left:1228px;top:256px;width:6px;height:7px;background:#e8d38a"></div>
<div class="a" style="left:1236px;top:255px;width:7px;height:9px;background:#777"></div>
<div class="a" style="left:1236px;top:257px;width:7px;height:4px;background:#eee"></div>
<div class="a" style="left:1244px;top:257px;width:7px;height:4px;background:#eee"></div>
<div class="a" style="left:1209px;top:276px;width:42px;height:2px;background:#333"></div>

<div class="t ci" style="left:942px;top:307px">Screenshot (61)</div>
<div class="t ci" style="left:1078px;top:307px">Screenshot (62)</div>
<div class="t ci" style="left:1214px;top:307px">Screenshot (63)</div>
<!-- status bar -->
<div class="a" style="left:756px;top:619px;width:584px;height:23px;background:#323232"></div>
<div class="t si" style="left:770px;top:626px">3 items</div>
<div class="a" style="left:818px;top:624px;width:1px;height:13px;background:#ddd"></div>
<div class="t si" style="left:830px;top:626px">1 item selected&nbsp;&nbsp;107 KB</div>
<div class="a" style="left:959px;top:624px;width:1px;height:13px;background:#ddd"></div>
<svg style="left:1295px;top:623px" width="17" height="13" viewBox="0 0 17 13"><rect x="0" y="0" width="5" height="13" fill="#f0f0f0"/><circle cx="2.5" cy="2.2" r=".9" fill="#286"/><circle cx="2.5" cy="6.5" r=".9" fill="#48f"/><circle cx="2.5" cy="10.8" r=".9" fill="#d22"/><path d="M6 2.2h4M12 2.2h5M6 6.5h4M12 6.5h5M6 10.8h4M12 10.8h5" stroke="#999" stroke-width="1"/></svg>
<div class="a" style="left:1314px;top:619px;width:22px;height:23px;background:#666;border:1px solid #7a7a7a"></div>
<svg style="left:1319px;top:625px" width="14" height="11" viewBox="0 0 14 11"><rect x="0" y="0" width="14" height="11" fill="#fff"/><rect x="1.5" y="1.5" width="11" height="8" fill="#4a9ee8"/><path d="M1.5 6Q6 4 12.5 7.5V9.5H1.5z" fill="#2f6e58"/></svg>

</body></html>
